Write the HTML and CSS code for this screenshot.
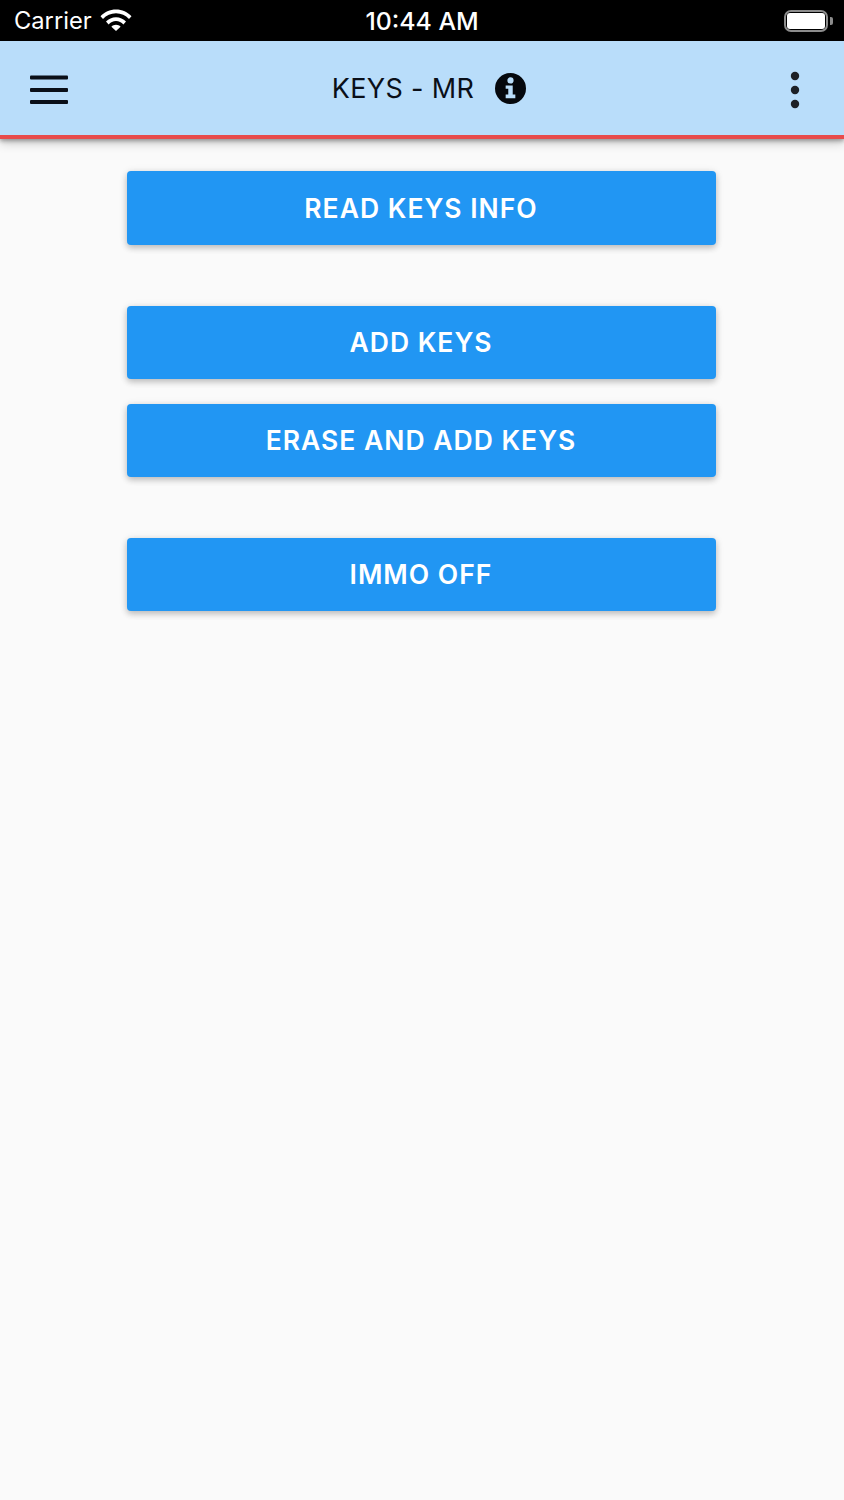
FILE: index.html
```html
<!DOCTYPE html>
<html lang="en">
<head>
<meta charset="utf-8">
<title>Keys - MR</title>
<link rel="stylesheet" href="styles.css">
</head>
<body>
<div class="status">
  <div class="status-left">
    <span class="carrier">Carrier</span>
    <svg class="wifi" width="32" height="22" viewBox="0 0 32 22"><path d="M0.500 7.200C4.400 3.200 9.900 0.500 16 0.500s11.600 2.700 15.500 6.700l-2.500 2.800C25.700 6.500 21.100 4.300 16 4.300S6.300 6.500 3 10z" fill="#fff"/><path d="M6 12.600C8.600 10 12.100 8.300 16 8.300s7.400 1.700 10 4.300l-2.600 2.800C21.500 13.400 18.900 12.100 16 12.100s-5.500 1.300-7.400 3.300z" fill="#fff"/><path d="M11.400 17.700c1.200-1.200 2.800-1.900 4.600-1.900s3.400.7 4.600 1.900L16 22z" fill="#fff"/></svg>
  </div>
  <span class="clock">10:44 AM</span>
  <div class="battery"><div class="battery-body"><div class="battery-fill"></div></div><div class="battery-cap"></div></div>
</div>
<header class="appbar">
  <svg class="menu" width="38" height="30" viewBox="0 0 38 30"><rect y="0.500" width="38" height="4" rx="1" fill="#0a0f18"/><rect y="13" width="38" height="4" rx="1" fill="#0a0f18"/><rect y="25" width="38" height="4" rx="1" fill="#0a0f18"/></svg>
  <div class="title">
    <span class="title-text">KEYS - MR</span>
    <svg class="info" width="31" height="31" viewBox="0 0 32 32"><path fill-rule="evenodd" fill="#05080d" d="M16 0a16 16 0 1 1 0 32a16 16 0 0 1 0-32zM16 4.500a3.200 3.200 0 1 0 0 6.400a3.200 3.200 0 0 0 0-6.400zM11 13v3.200h2.700v6h-2.700v3.800h10v-3.800h-2.700v-9.200z"/></svg>
  </div>
  <svg class="more" width="10" height="38" viewBox="0 0 10 38"><circle cx="5" cy="5" r="4.200" fill="#1c2026"/><circle cx="5" cy="19" r="4.200" fill="#1c2026"/><circle cx="5" cy="33" r="4.200" fill="#1c2026"/></svg>
</header>
<main class="content">
  <button class="btn">READ KEYS INFO</button>
  <button class="btn btn-group">ADD KEYS</button>
  <button class="btn btn-near">ERASE AND ADD KEYS</button>
  <button class="btn btn-last">IMMO OFF</button>
</main>
</body>
</html>
```

FILE: styles.css
```css
* { box-sizing: border-box; }
html, body { margin: 0; padding: 0; }
body {
  width: 844px;
  height: 1500px;
  background: #fafafa;
  font-family: Inter, "Liberation Sans", sans-serif;
  overflow: hidden;
}
.status {
  height: 41px;
  background: #000;
  color: #fff;
  display: grid;
  grid-template-columns: 1fr auto 1fr;
  align-items: center;
  padding: 1px 11px 0;
}
.status-left { display: flex; align-items: center; gap: 8px; padding-left: 3px; }
.carrier { font-size: 23.700px; line-height: 28px; }
.wifi { margin-top: -2px; }
.clock { font-size: 24.800px; font-weight: 500; line-height: 28px; }
.battery { justify-self: end; display: flex; align-items: center; gap: 2px; }
.battery-body {
  width: 44px;
  height: 22px;
  border: 2px solid #8c8c8c;
  border-radius: 7px;
  padding: 1px;
}
.battery-fill { width: 100%; height: 100%; background: #fff; border-radius: 3px; }
.battery-cap { width: 3px; height: 8px; background: #8c8c8c; border-radius: 0 2px 2px 0; }
.appbar {
  height: 97.500px;
  background: #b9ddfa;
  border-bottom: 4px solid #e84b4b;
  box-shadow: 0 2px 4px rgba(0, 0, 0, 0.3), 0 4px 10px rgba(0, 0, 0, 0.2);
  display: flex;
  align-items: center;
  justify-content: space-between;
  padding: 4px 44px 0 30px;
}
.title {
  display: flex;
  align-items: center;
  gap: 21px;
  margin-bottom: 2px;
  color: #0a0f18;
}
.title-text { font-size: 27px; line-height: 32px; letter-spacing: 0.350px; }
.content {
  display: flex;
  flex-direction: column;
  align-items: center;
  padding: 32.500px 2px 0 0;
}
.btn {
  width: 589px;
  height: 73.500px;
  border: 0;
  border-radius: 4px;
  background: #2196f3;
  color: #fff;
  font-family: inherit;
  font-size: 26.500px;
  font-weight: 600;
  letter-spacing: 1px;
  box-shadow: 0 3px 6px rgba(0, 0, 0, 0.2), 0 1px 8px rgba(0, 0, 0, 0.1);
  padding: 0;
}
.btn-group { margin-top: 61px; }
.btn-near { margin-top: 24.500px; }
.btn-last { margin-top: 60.500px; height: 73px; }
```
